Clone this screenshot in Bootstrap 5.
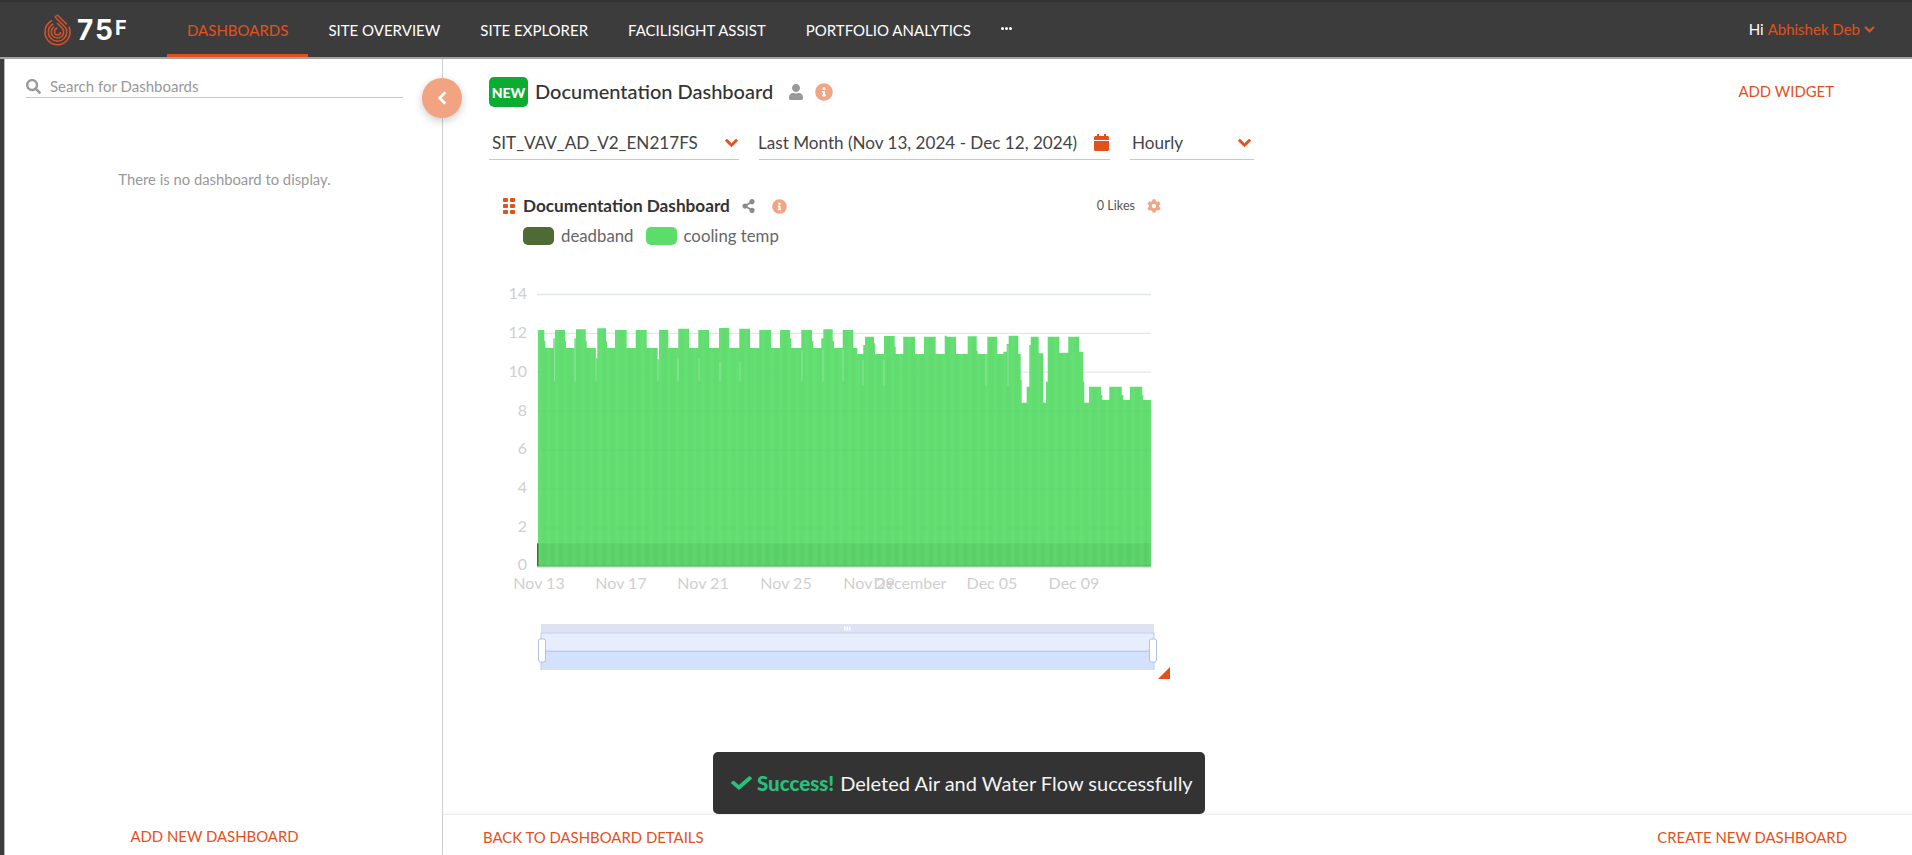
<!DOCTYPE html>
<html lang="en">
<head>
<meta charset="utf-8">
<title>Documentation Dashboard</title>
<link href="https://cdn.jsdelivr.net/npm/bootstrap@5.3.0/dist/css/bootstrap.min.css" rel="stylesheet">
<style>
html,body{height:100%;overflow:hidden}
body{font-family:"Lato","Liberation Sans",sans-serif;font-size:15px;color:#333;background:#fff}
.ico{fill:currentColor;display:block;flex:none}
.ico-bold path{stroke:currentColor;stroke-width:34}
.tone{color:#e4501c}
.topbar{height:59px;background:#3c3c3c;border-bottom:2px solid #a3a3a3;box-shadow:inset 0 2px #333;flex:none}
.brand-wrap{width:167px;padding-left:44px;gap:6px;padding-top:2px}
.brand-word{font-family:"Inter","Liberation Sans",sans-serif;font-weight:700;font-size:28px;color:#fff;line-height:1;letter-spacing:2px}
.brand-word sup{font-size:20px;top:-.22em;vertical-align:baseline;position:relative;margin-left:0}
.nav-entry{height:57px;padding:6px 20px 0;color:#fff;text-decoration:none;font-size:15px;display:flex;align-items:center;border-bottom:3px solid transparent}
.nav-entry.on{color:#e4501c;border-bottom-color:#e4501c}
.more-dots{gap:1px;padding:0 0 0 10px}
.more-dots i{width:3px;height:3px;background:#fff;border-radius:50%}
.hello{padding:2px 37px 0 0;color:#fff;font-size:15px;gap:4px}
.shell{border-left:4px solid #3c3c3c;min-height:0;position:relative}
.side-pane{width:439px;flex:none;border-left:1px solid #b5b5b5;border-right:1px solid #cfcfcf}
.side-search{margin:0 39px 0 21px;height:39px;border-bottom:1px solid #c9c9c9;color:#999;gap:9px;padding-top:16px}
.side-empty{margin-top:72px;color:#999;text-align:center;font-size:14.8px;line-height:18px;padding-left:2px}
.side-foot{height:41px;padding:4px 18px 0 0}
.act{color:#e4501c;text-decoration:none;font-size:14.9px}
.fold-btn{position:absolute;left:418px;top:19px;width:40px;height:40px;border-radius:50%;background:#f2a482;color:#fff;box-shadow:0 3px 8px rgba(0,0,0,.2);z-index:3}
.main-pane{min-width:0}
.main-body{padding:18px 0 0 46px;min-height:0;overflow:hidden}
.title-row{height:30px}
.new-tag{width:39px;height:30px;border-radius:5px;background:#0aad2f;color:#fff;font-weight:900;font-size:14px}
.page-title{font-size:20px;font-weight:500;color:#333;margin:0 0 0 7px;height:30px;line-height:28px}
.tip-ico{color:#f0a585}
.add-widget{margin:-2px 78px 0 0}
.filters{margin-top:21px;gap:20px}
.pick{height:32px;border-bottom:1px solid #c9c9c9;font-size:17.1px;color:#444;padding:0 0 2px 3px;white-space:nowrap}
.pick-a{width:250px}
.pick-b{width:351px;padding-left:0}
.pick-b span{margin-left:-1px}
.pick-c{width:124px;padding-left:2px;padding-right:3px}
.widget{margin:34px 0 0 11px;width:680px}
.widget-head{height:24px;padding-left:3px}
.grip{display:grid;grid-template-columns:5px 5px;gap:2px;margin-right:8px}
.grip i{width:5px;height:4px;background:#e4501c;border-radius:1px}
.widget-title{font-size:17.2px;font-weight:700;color:#333;margin:0;line-height:24px}
.likes{font-size:12.6px;color:#555;margin-left:auto;margin-right:12px}
.legend-row{margin-top:10px;padding:0 0 2px 23px;height:18px;color:#666;font-size:16.8px}
.swatch{width:31px;height:18px;border-radius:5px;margin-right:7px}
.sw-a{background:#4f6b35}
.sw-b{background:#5cdd6a;margin-left:12px}
.chart-svg{display:block;margin-top:34px;width:680px;height:400px}
.axis-t{font-family:"Lato","Liberation Sans",sans-serif;font-size:16px;fill:#cfcfcf}
.main-foot{height:41px;border-top:1px solid #eee;box-shadow:0 -2px 3px rgba(0,0,0,.03);padding:4px 65px 0 40px;flex:none}
.notice{position:absolute;left:709px;top:693px;width:492px;height:62px;background:#333;border-radius:5px;color:#f4f4f4;font-size:20px;padding-left:18px;z-index:5;white-space:nowrap}
.notice b{color:#28c17c;font-weight:900;margin:0 6px 0 5px;font-size:20.5px}
</style>
</head>
<body class="d-flex flex-column">
<header class="topbar d-flex align-items-center">
  <div class="brand-wrap d-flex align-items-center">
    <svg width="27" height="32" viewBox="0 0 27 32" fill="none" stroke="#d9522a" stroke-width="1.5" class="ico" style="fill:none">
      <path d="M8 6.500C3.500 9 1 13 1 18c0 7 5.500 12.700 12.500 12.700S26 25 26 18c0-2-.4-3.700-1.200-5.300"/>
      <path d="M11 3 20.500 12.500C22.300 14 22.800 16 22.800 18c0 5-4.200 9.300-9.300 9.300S4.300 23 4.300 18c0-3.500 2-6.500 5-8"/>
      <path d="M13.500 1 23 10.500"/><path d="M11 3 13.500 1"/>
      <path d="M13 9 18 14c1.100 1.200 1.700 2.500 1.700 4 0 3.400-2.800 6-6.200 6s-6.200-2.600-6.200-6c0-2.200 1.100-4 2.900-5.200"/>
      <path d="M13.500 14c-2 .6-3 2-3 4 0 1.700 1.300 3 3 3s3-1.300 3-3"/>
    </svg>
    <span class="brand-word">75<sup>F</sup></span>
  </div>
  <nav class="d-flex align-items-center">
    <a class="nav-entry on" href="#">DASHBOARDS</a>
    <a class="nav-entry" href="#">SITE OVERVIEW</a>
    <a class="nav-entry" href="#">SITE EXPLORER</a>
    <a class="nav-entry" href="#">FACILISIGHT ASSIST</a>
    <a class="nav-entry" href="#">PORTFOLIO ANALYTICS</a>
    <span class="more-dots d-flex"><i></i><i></i><i></i></span>
  </nav>
  <div class="hello ms-auto d-flex align-items-center">
    <span>Hi</span><span class="tone">Abhishek Deb</span>
    <svg class="ico tone ico-bold" width="11" height="11" viewBox="0 0 448 512"><path d="M207.029 381.476L12.686 187.132c-9.373-9.373-9.373-24.569 0-33.941l22.667-22.667c9.357-9.357 24.522-9.375 33.901-.04L224 284.505l154.745-154.021c9.379-9.335 24.544-9.317 33.901.04l22.667 22.667c9.373 9.373 9.373 24.569 0 33.941L240.971 381.476c-9.373 9.372-24.569 9.372-33.942 0z"/></svg>
  </div>
</header>

<div class="shell d-flex flex-grow-1">
  <aside class="side-pane d-flex flex-column">
    <div class="side-search d-flex align-items-center">
      <svg class="ico" width="15" height="15" viewBox="0 0 512 512"><path d="M505 442.700L405.300 343c-4.500-4.500-10.600-7-17-7H372c27.600-35.300 44-79.700 44-128C416 93.100 322.900 0 208 0S0 93.100 0 208s93.100 208 208 208c48.300 0 92.700-16.400 128-44v16.300c0 6.400 2.500 12.500 7 17l99.700 99.700c9.400 9.400 24.600 9.400 33.900 0l28.300-28.300c9.400-9.400 9.400-24.600.1-34zM208 336c-70.700 0-128-57.200-128-128 0-70.700 57.200-128 128-128 70.700 0 128 57.200 128 128 0 70.700-57.200 128-128 128z"/></svg>
      <span>Search for Dashboards</span>
    </div>
    <p class="side-empty mb-0">There is no dashboard to display.</p>
    <div class="side-foot mt-auto d-flex align-items-center justify-content-center"><a class="act" href="#">ADD NEW DASHBOARD</a></div>
  </aside>

  <button class="fold-btn border-0 d-flex align-items-center justify-content-center p-0" type="button" aria-label="Collapse">
    <svg class="ico ico-bold" width="12" height="14" viewBox="0 0 320 512"><path d="M34.520 239.030L228.870 44.690c9.370-9.370 24.570-9.370 33.940 0l22.670 22.670c9.360 9.360 9.370 24.520.04 33.900L131.490 256l154.020 154.750c9.340 9.380 9.320 24.540-.04 33.900l-22.670 22.670c-9.370 9.370-24.570 9.370-33.940 0L34.520 272.970c-9.370-9.370-9.370-24.570 0-33.940z"/></svg>
  </button>

  <main class="main-pane flex-grow-1 d-flex flex-column">
    <div class="main-body flex-grow-1">
      <div class="title-row d-flex align-items-center">
        <span class="new-tag d-flex align-items-center justify-content-center">NEW</span>
        <h1 class="page-title">Documentation Dashboard</h1>
        <svg class="ico ms-3" width="14" height="16" viewBox="0 0 448 512" style="color:#999"><path d="M224 256c70.700 0 128-57.300 128-128S294.700 0 224 0 96 57.300 96 128s57.300 128 128 128zm89.600 32h-16.700c-22.200 10.200-46.900 16-72.900 16s-50.600-5.800-72.900-16h-16.700C60.200 288 0 348.200 0 422.400V464c0 26.500 21.500 48 48 48h352c26.500 0 48-21.500 48-48v-41.600c0-74.200-60.200-134.400-134.400-134.400z"/></svg>
        <svg class="ico tip-ico" style="margin-left:12px" width="18" height="18" viewBox="0 0 512 512"><path d="M256 8C119 8 8 119 8 256s111 248 248 248 248-111 248-248S393 8 256 8zm0 110c23.200 0 42 18.800 42 42s-18.800 42-42 42-42-18.800-42-42 18.800-42 42-42zm56 254c0 6.600-5.400 12-12 12h-88c-6.600 0-12-5.400-12-12v-24c0-6.600 5.400-12 12-12h12v-64h-12c-6.600 0-12-5.400-12-12v-24c0-6.600 5.400-12 12-12h64c6.600 0 12 5.400 12 12v100h12c6.600 0 12 5.400 12 12v24z"/></svg>
        <a class="act add-widget ms-auto" href="#">ADD WIDGET</a>
      </div>

      <div class="filters d-flex">
        <div class="pick pick-a d-flex align-items-center justify-content-between">
          <span>SIT_VAV_AD_V2_EN217FS</span>
          <svg class="ico tone ico-bold" width="13" height="14" viewBox="0 0 448 512" style="margin-right:1px"><path d="M207.029 381.476L12.686 187.132c-9.373-9.373-9.373-24.569 0-33.941l22.667-22.667c9.357-9.357 24.522-9.375 33.901-.04L224 284.505l154.745-154.021c9.379-9.335 24.544-9.317 33.901.04l22.667 22.667c9.373 9.373 9.373 24.569 0 33.941L240.971 381.476c-9.373 9.372-24.569 9.372-33.942 0z"/></svg>
        </div>
        <div class="pick pick-b d-flex align-items-center justify-content-between">
          <span>Last Month (Nov 13, 2024 - Dec 12, 2024)</span>
          <svg class="ico tone" width="15" height="17" viewBox="0 0 15 17" style="margin-right:1px"><path d="M3 0h2v2h5V0h2v2h1.500C14.300 2 15 2.700 15 3.500V6H0V3.500C0 2.700.7 2 1.500 2H3zM0 7h15v8.500c0 .8-.7 1.500-1.500 1.500h-12C.7 17 0 16.300 0 15.500z"/></svg>
        </div>
        <div class="pick pick-c d-flex align-items-center justify-content-between">
          <span>Hourly</span>
          <svg class="ico tone ico-bold" width="13" height="14" viewBox="0 0 448 512"><path d="M207.029 381.476L12.686 187.132c-9.373-9.373-9.373-24.569 0-33.941l22.667-22.667c9.357-9.357 24.522-9.375 33.901-.04L224 284.505l154.745-154.021c9.379-9.335 24.544-9.317 33.901.04l22.667 22.667c9.373 9.373 9.373 24.569 0 33.941L240.971 381.476c-9.373 9.372-24.569 9.372-33.942 0z"/></svg>
        </div>
      </div>

      <section class="widget">
        <div class="widget-head d-flex align-items-center">
          <span class="grip"><i></i><i></i><i></i><i></i><i></i><i></i></span>
          <h2 class="widget-title">Documentation Dashboard</h2>
          <svg class="ico" width="13" height="14" viewBox="0 0 448 512" style="color:#8a8a8a;margin-left:12px"><path d="M352 320c-22.608 0-43.387 7.819-59.790 20.895l-102.486-64.054a96.551 96.551 0 0 0 0-41.683l102.486-64.054C308.613 184.181 329.392 192 352 192c53.019 0 96-42.981 96-96S405.019 0 352 0s-96 42.981-96 96c0 7.158.79 14.130 2.276 20.841L155.790 180.895C139.387 167.819 118.608 160 96 160c-53.019 0-96 42.981-96 96s42.981 96 96 96c22.608 0 43.387-7.819 59.790-20.895l102.486 64.054A96.301 96.301 0 0 0 256 416c0 53.019 42.981 96 96 96s96-42.981 96-96-42.981-96-96-96z"/></svg>
          <svg class="ico tip-ico" style="margin-left:17px" width="15" height="15" viewBox="0 0 512 512"><path d="M256 8C119 8 8 119 8 256s111 248 248 248 248-111 248-248S393 8 256 8zm0 110c23.200 0 42 18.800 42 42s-18.800 42-42 42-42-18.800-42-42 18.800-42 42-42zm56 254c0 6.600-5.400 12-12 12h-88c-6.600 0-12-5.400-12-12v-24c0-6.600 5.400-12 12-12h12v-64h-12c-6.600 0-12-5.400-12-12v-24c0-6.600 5.400-12 12-12h64c6.600 0 12 5.400 12 12v100h12c6.600 0 12 5.400 12 12v24z"/></svg>
          <span class="likes">0 Likes</span>
          <svg class="ico tip-ico" style="margin-right:19px" width="14" height="14" viewBox="0 0 512 512"><path d="M487.400 315.700l-42.600-24.600c4.300-23.200 4.300-47 0-70.200l42.600-24.600c4.900-2.800 7.100-8.600 5.500-14-11.100-35.600-30-67.800-54.700-94.600-3.800-4.100-10-5.100-14.800-2.300L380.800 110c-17.900-15.400-38.500-27.300-60.800-35.100V25.800c0-5.600-3.900-10.500-9.400-11.700-36.700-8.200-74.300-7.800-109.200 0-5.500 1.200-9.400 6.100-9.400 11.700V75c-22.200 7.900-42.800 19.800-60.800 35.100L88.700 85.500c-4.900-2.800-11-1.900-14.800 2.300-24.700 26.700-43.600 58.900-54.700 94.600-1.700 5.400.6 11.200 5.500 14L67.300 221c-4.300 23.200-4.300 47 0 70.200l-42.600 24.600c-4.900 2.800-7.100 8.600-5.500 14 11.100 35.600 30 67.800 54.700 94.600 3.800 4.100 10 5.100 14.800 2.300l42.600-24.600c17.900 15.400 38.500 27.300 60.800 35.100v49.200c0 5.600 3.900 10.500 9.400 11.700 36.700 8.200 74.300 7.800 109.200 0 5.500-1.200 9.400-6.100 9.400-11.700v-49.200c22.200-7.900 42.800-19.800 60.800-35.100l42.600 24.600c4.900 2.800 11 1.900 14.800-2.300 24.700-26.700 43.600-58.900 54.700-94.600 1.500-5.500-.7-11.300-5.600-14.100zM256 336c-44.100 0-80-35.900-80-80s35.900-80 80-80 80 35.900 80 80-35.900 80-80 80z"/></svg>
        </div>
        <div class="legend-row d-flex align-items-center">
          <span class="swatch sw-a"></span><span>deadband</span>
          <span class="swatch sw-b"></span><span>cooling temp</span>
        </div>
        <svg class="chart-svg" viewBox="500 280 680 400" role="img" aria-label="Bar chart of deadband and cooling temp">
          <defs>
            <pattern id="bands" width="8.6" height="10" patternUnits="userSpaceOnUse">
              <rect width="4.300" height="10" fill="#000" fill-opacity=".018"/>
            </pattern>
          </defs>
          <g stroke="#e2e6f3" stroke-width="1.300">
            <line x1="537" x2="1151" y1="294.500" y2="294.500"/>
            <line x1="537" x2="1151" y1="333.300" y2="333.300"/>
            <line x1="537" x2="1151" y1="372.200" y2="372.200"/>
          </g>
          <path id="coolBars" fill="#5cdd6a" fill-opacity=".95" d="M538 567V330H1151V567Z"/>
          <path id="coolBands" fill="url(#bands)" d="M538 567V330H1151V567Z"/>
          <g id="notches" stroke="#fff" stroke-opacity=".28" stroke-width="1"></g>
          <g stroke="#000" stroke-opacity=".02" stroke-width="1">
            <line x1="538" x2="1151" y1="411" y2="411"/><line x1="538" x2="1151" y1="450" y2="450"/>
            <line x1="538" x2="1151" y1="489" y2="489"/><line x1="538" x2="1151" y1="528" y2="528"/>
          </g>
          <rect x="538" y="543.300" width="613" height="23" fill="#4fc05c" fill-opacity=".3"/>
          <rect x="538" y="543.300" width="613" height="23" fill="url(#bands)"/>
          <rect x="537" y="543.300" width="1.500" height="23.400" fill="#4f6b35"/>
          <rect x="538" y="565.600" width="613" height="1" fill="#4f9a49" fill-opacity=".6"/>
          <rect x="537" y="566.600" width="614" height="1.200" fill="#dcdcdc"/>
          <g class="axis-t" text-anchor="end">
            <text x="527" y="299">14</text><text x="527" y="338">12</text><text x="527" y="377">10</text>
            <text x="527" y="416">8</text><text x="527" y="454">6</text><text x="527" y="493">4</text>
            <text x="527" y="532">2</text><text x="527" y="570">0</text>
          </g>
          <g class="axis-t" text-anchor="middle">
            <text x="539" y="589">Nov 13</text><text x="621" y="589">Nov 17</text><text x="703" y="589">Nov 21</text>
            <text x="786" y="589">Nov 25</text><text x="869" y="589">Nov 29</text><text x="910" y="589">December</text>
            <text x="992" y="589">Dec 05</text><text x="1074" y="589">Dec 09</text>
          </g>
          <rect x="541" y="624" width="613" height="9" fill="#dde3f2"/>
          <rect x="541" y="633" width="613" height="17.500" fill="#e6edfc"/>
          <rect x="541" y="652" width="613" height="18" fill="#d3e1fb"/>
          <rect x="541" y="650.500" width="613" height="1.500" fill="#b5cbf5"/>
          <path d="M541 670V633H1154V670" fill="none" stroke="#c3d1ee" stroke-width="1.200"/>
          <g fill="#fff"><rect x="844" y="626.500" width="1.500" height="4"/><rect x="846.500" y="626.500" width="1.500" height="4"/><rect x="849" y="626.500" width="1.500" height="4"/></g>
          <g fill="#fff" stroke="#b4c1dc"><rect x="538.500" y="639" width="7" height="23" rx="2"/><rect x="1149.500" y="639" width="7" height="23" rx="2"/></g>
          <path d="M1158 679 1170 667V679Z" fill="#e4501c"/>
        </svg>
      </section>
    </div>
    <footer class="main-foot d-flex align-items-center justify-content-between">
      <a class="act" href="#">BACK TO DASHBOARD DETAILS</a>
      <a class="act" href="#">CREATE NEW DASHBOARD</a>
    </footer>
  </main>

  <div class="notice d-flex align-items-center" role="status">
    <svg class="ico" width="21" height="18" viewBox="0 0 512 512" style="color:#28c17c" preserveAspectRatio="none"><path d="M173.898 439.404l-166.400-166.400c-9.997-9.997-9.997-26.206 0-36.204l36.203-36.204c9.997-9.998 26.207-9.998 36.204 0L192 312.690 432.095 72.596c9.997-9.997 26.207-9.997 36.204 0l36.203 36.204c9.997 9.997 9.997 26.206 0 36.204l-294.400 294.401c-9.998 9.997-26.207 9.997-36.204-.001z"/></svg>
    <b>Success!</b><span>Deleted Air and Water Flow successfully</span>
  </div>
</div>

<script src="https://cdn.jsdelivr.net/npm/bootstrap@5.3.0/dist/js/bootstrap.bundle.min.js"></script>
<script>
(function(){
  var a=[163,150,166,183,190,204,195,175,225,150,228,183,253,204,258,175,287,148,290,183,318,204,322,235,348,145,351,183,375,204,410,150,437,204,470,150,503,204,507,238,535,150,565,204,597,146,625,204,657,150,687,204,718,144,748,204,780,146,808,204,843,150,870,204];
  var b=[30,150,34,175,64,204,96,150,100,183,124,204,130,175,158,148,162,183,188,204,220,150,232,204,250,222,255,195,282,170,285,190,312,222,344,168,347,200,370,222,405,170,432,222,467,170,494,222,500,167,528,170,556,222];
  var c=[23,222,50,169,53,213,82,222,112,170,130,222,140,215,146,192,175,167,182,222,185,300,200,368,208,320,212,195,236,170,250,220,258,368,263,305,298,170,325,218,357,170,370,215,373,305,387,368,423,320,427,345,448,360,485,320,490,345,510,360,547,320,550,345,573,360];
  var d='M538 567',i;
  function add(l,base){for(i=0;i<l.length;i+=2){d+='V'+(280+l[i+1]/3).toFixed(1)+'H'+(base+l[i]/3).toFixed(1);}}
  add(a,490);add(b,780);add(c,960);
  d+='V567Z';
  document.getElementById('coolBars').setAttribute('d',d);
  document.getElementById('coolBands').setAttribute('d',d);
  var n=[[554.5,338,381],[575,338,381],[596,345,381],[658,358,381],[678,358,381],[699,358,381],[720,362,381],[740,362,381],[802,350,381],[823,350,381],[843,350,381],[863,360,386],[884,360,386],[986,352,386],[1008,345,386]];
  var g=document.getElementById('notches');
  n.forEach(function(p){var l=document.createElementNS('http://www.w3.org/2000/svg','line');l.setAttribute('x1',p[0]);l.setAttribute('x2',p[0]);l.setAttribute('y1',p[1]);l.setAttribute('y2',p[2]);g.appendChild(l);});
})();
</script>
</body>
</html>
